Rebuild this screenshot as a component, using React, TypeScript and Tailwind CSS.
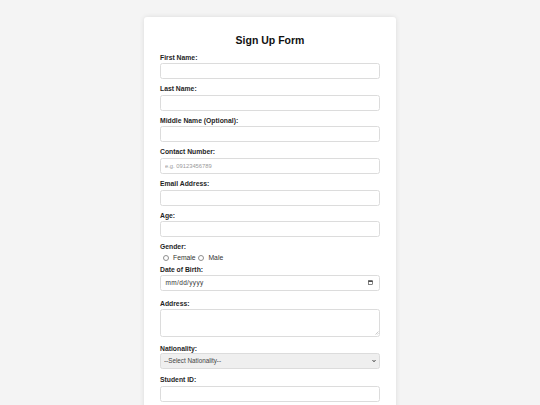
import React from 'react';

const labelCls = 'block text-[6.8px] leading-[8px] font-bold text-[#1f1f1f]';
const inputCls =
  'block w-full h-[16px] border border-[#dcdcdc] rounded-[2.5px] px-[4px] text-[5.8px] text-[#333] bg-white outline-none placeholder:text-[#9a9a9a]';

function Field({
  label,
  placeholder,
  type = 'text',
  gap = 'mb-[1.6px]',
  after = 'mb-[6px]',
}: {
  label: string;
  placeholder?: string;
  type?: string;
  gap?: string;
  after?: string;
}) {
  return (
    <div className={after}>
      <label className={`${labelCls} ${gap}`}>{label}</label>
      <input type={type} placeholder={placeholder} className={inputCls} />
    </div>
  );
}

function Radio({ name, label, first }: { name: string; label: string; first?: boolean }) {
  return (
    <label className="flex items-center text-[6.8px] leading-[8px] text-[#333]">
      <input
        type="radio"
        name={name}
        className={`appearance-none w-[6px] h-[6px] rounded-full border border-[#8f8f8f] bg-white ${
          first ? 'ml-[2.7px]' : 'ml-[2.5px]'
        } mr-[4.3px]`}
      />
      {label}
    </label>
  );
}

export default function App() {
  return (
    <div
      className="min-h-screen bg-[#f4f4f4] pt-[17px]"
      style={{ fontFamily: '"Liberation Sans", Arial, sans-serif' }}
    >
      <form className="mx-auto w-[252px] bg-white rounded-[3px] shadow-[0_0_5px_rgba(0,0,0,0.1)] px-[16px] pt-[17px] pb-[16px]">
        <h2 className="text-center text-[10.5px] leading-[12px] font-bold text-[#111] mb-[7.7px]">
          Sign Up Form
        </h2>

        <Field label="First Name:" />
        <Field label="Last Name:" />
        <Field label="Middle Name (Optional):" />
        <Field label="Contact Number:" type="tel" placeholder="e.g. 09123456789" />
        <Field label="Email Address:" type="email" />
        <Field label="Age:" type="number" />

        <div className="mb-[3.1px]">
          <label className={`${labelCls} mb-[1.7px]`}>Gender:</label>
          <div className="flex items-center h-[10px]">
            <Radio name="gender" label="Female" first />
            <Radio name="gender" label="Male" />
          </div>
        </div>

        <div className="mb-[8.7px]">
          <label className={`${labelCls} mb-[0.9px]`}>Date of Birth:</label>
          <div className="flex items-center justify-between w-full h-[16px] border border-[#dcdcdc] rounded-[2.5px] pl-[4.5px] pr-[6px] bg-white">
            <span className="text-[6.5px] leading-[8px] tracking-[0.35px] text-[#333]">mm/dd/yyyy</span>
            <svg width="5" height="5" viewBox="0 0 10 10">
              <rect x="1" y="1.5" width="8" height="7.5" fill="none" stroke="#333" strokeWidth="1.2" />
              <rect x="1" y="1.5" width="8" height="2.2" fill="#333" />
            </svg>
          </div>
        </div>

        <div className="mb-[8.1px]">
          <label className={`${labelCls} mb-[1px]`}>Address:</label>
          <div className="relative">
            <textarea className="block w-full h-[28.3px] border border-[#dcdcdc] rounded-[2.5px] px-[4px] py-[2px] text-[5.8px] resize-none outline-none bg-white" />
            <svg className="absolute right-[1.5px] bottom-[1.5px]" width="4" height="4" viewBox="0 0 8 8">
              <path d="M7 1 L1 7 M7 4.5 L4.5 7" stroke="#999" strokeWidth="1" />
            </svg>
          </div>
        </div>

        <div className="mb-[7.3px]">
          <label className={labelCls}>Nationality:</label>
          <div className="relative">
            <select className="block w-full h-[16px] appearance-none border border-[#dcdcdc] rounded-[2.5px] pl-[3px] text-[6.3px] text-[#444] bg-[#efefef] outline-none">
              <option>--Select Nationality--</option>
              <option>Filipino</option>
              <option>American</option>
              <option>Other</option>
            </select>
            <svg
              className="absolute right-[4px] top-1/2 -translate-y-1/2 pointer-events-none"
              width="4"
              height="3"
              viewBox="0 0 8 6"
            >
              <path d="M1 1 L4 4.5 L7 1" fill="none" stroke="#333" strokeWidth="1.8" />
            </svg>
          </div>
        </div>

        <Field label="Student ID:" gap="mb-[1.9px]" after="mb-[6px]" />
      </form>
    </div>
  );
}
